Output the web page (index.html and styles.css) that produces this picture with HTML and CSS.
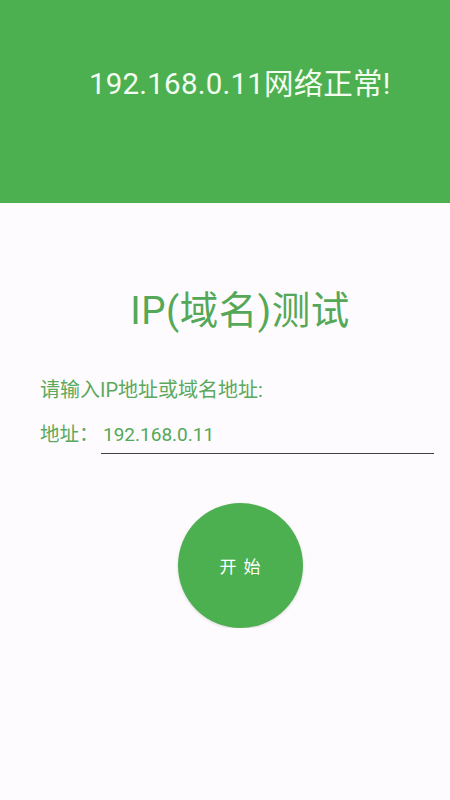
FILE: index.html
```html
<!DOCTYPE html>
<html lang="zh-CN">
<head>
<meta charset="utf-8">
<link rel="stylesheet" href="styles.css">
</head>
<body>
<header class="top">
  <div class="status">192.168.0.11网络正常!</div>
</header>
<main class="content">
  <h1 class="title">IP(域名)测试</h1>
  <p class="hint">请输入IP地址或域名地址:</p>
  <div class="row">
    <span class="label">地址：</span>
    <div class="field">192.168.0.11</div>
  </div>
  <div class="btn-wrap">
    <button class="start">开 始</button>
  </div>
</main>
</body>
</html>
```
FILE: styles.css
```css
html, body {
  margin: 0;
  padding: 0;
  background: #fdfbfd;
  font-family: Roboto, "Noto Sans CJK SC", sans-serif;
}
.top {
  height: 203px;
  background: #4caf50;
  box-sizing: border-box;
  padding: 64px 0 0 89px;
}
.status {
  color: #f2fdf0;
  font-size: 29.5px;
  line-height: 40px;
  letter-spacing: 0.2px;
}
.content {
  display: flex;
  flex-direction: column;
}
.title {
  margin: 82px 0 0 30px;
  text-align: center;
  font-weight: 400;
  color: #55a857;
  font-size: 38.5px;
  line-height: 52px;
  letter-spacing: 0.5px;
}
.hint {
  margin: 39px 0 0 40px;
  color: #5aa95c;
  font-size: 20px;
  line-height: 28px;
}
.row {
  display: flex;
  align-items: flex-end;
  margin: 16px 16px 0 40px;
}
.label {
  color: #5aa95c;
  font-size: 19.5px;
  line-height: 30px;
  width: 61px;
  padding-bottom: 4px;
}
.field {
  flex: 1;
  color: #55a857;
  font-size: 19px;
  line-height: 30px;
  padding-left: 2px;
  padding-bottom: 3px;
  border-bottom: 1.5px solid #444;
}
.btn-wrap {
  display: flex;
  justify-content: center;
  margin: 49px 0 0 30px;
}
.start {
  width: 125px;
  height: 125px;
  border-radius: 50%;
  border: none;
  background: #4caf50;
  color: #fff;
  font-family: Roboto, "Noto Sans CJK SC", sans-serif;
  font-size: 17px;
  letter-spacing: 1.5px;
  text-indent: 1.5px;
  box-shadow: 0 1px 3px rgba(0,0,0,0.15);
  padding: 0;
}
```
